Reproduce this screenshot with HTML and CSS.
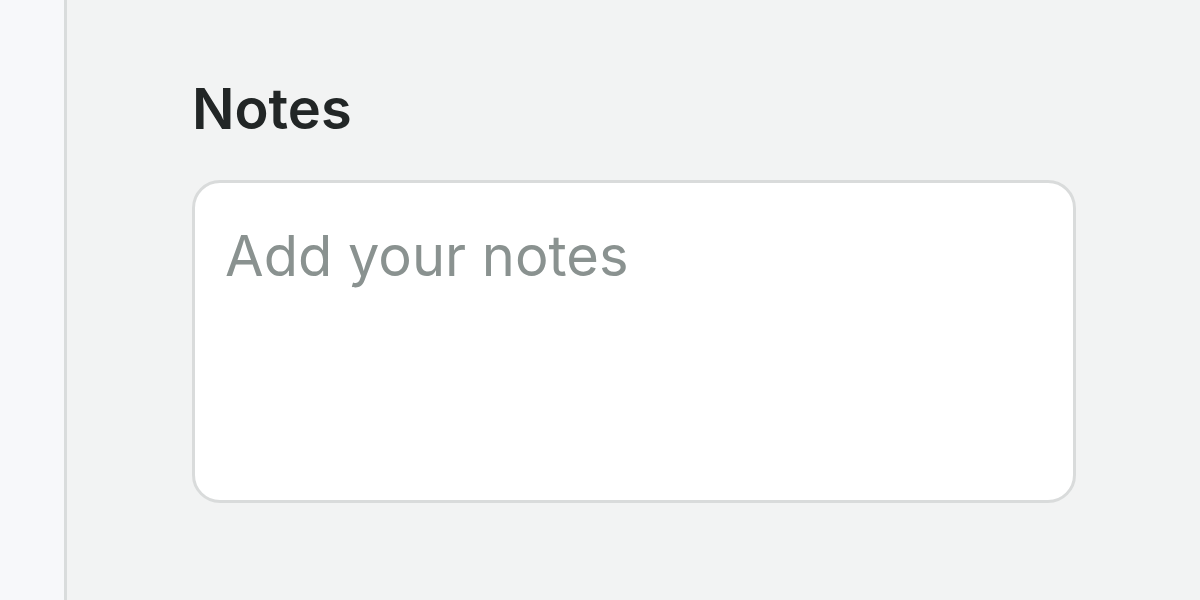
FILE: index.html
```html
<!DOCTYPE html>
<html lang="en">
<head>
    <meta charset="UTF-8">
    <meta name="viewport" content="width=device-width, initial-scale=1.0">
    <title>Notes</title>
    <link rel="stylesheet" href="styles.css">
</head>
<body>
    <div class="layout">
        <aside class="sidebar"></aside>
        <main class="content">
            <label class="notes-label" for="notes">Notes</label>
            <textarea id="notes" class="notes-input" placeholder="Add your notes"></textarea>
        </main>
    </div>
</body>
</html>
```

FILE: styles.css
```css
html, body {
    margin: 0;
    padding: 0;
    height: 100%;
}
body {
    font-family: Inter, "Noto Sans", sans-serif;
    background-color: #f2f3f3;
}
.layout {
    display: flex;
    height: 100%;
}
.sidebar {
    width: 64px;
    flex-shrink: 0;
    background-color: #f7f8fa;
    border-right: 3px solid #d9dcdc;
}
.content {
    flex: 1;
    padding: 74px 0 0 125px;
    display: flex;
    flex-direction: column;
}
.notes-label {
    font-size: 56px;
    font-weight: 600;
    color: #222626;
    line-height: 70px;
    margin-bottom: 36px;
}
.notes-input {
    box-sizing: border-box;
    width: 884px;
    height: 323px;
    border: 3px solid #d9dbdb;
    border-radius: 28px;
    background-color: #fff;
    padding: 40px 30px 30px;
    font-family: inherit;
    font-size: 56px;
    line-height: 1.2;
    color: #222626;
    resize: none;
    outline: none;
}
.notes-input::placeholder {
    color: #8a9290;
}
```
